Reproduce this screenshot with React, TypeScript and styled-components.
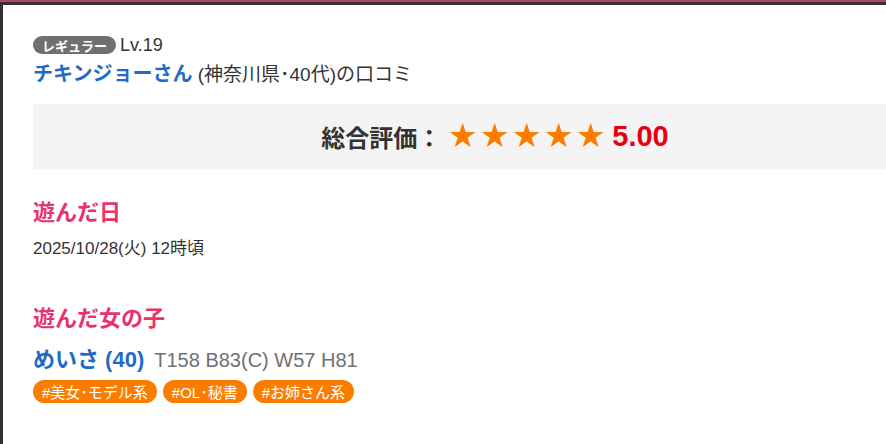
import React from 'react';
import styled, { createGlobalStyle } from 'styled-components';

const GlobalStyle = createGlobalStyle`
    html, body {
        margin: 0;
        padding: 0;
        background: #fff;
        overflow: hidden;
    }
    body {
        font-family: 'Liberation Sans', 'Noto Sans CJK JP', sans-serif;
        color: #333;
    }
`;

const tags = ['#美女･モデル系', '#OL･秘書', '#お姉さん系'];

// 口コミ詳細
function App() {
    return (
        <>
            <GlobalStyle />
            <Page>
                <Card>
                    <Reviewer>
                        <RankRow>
                            <Rank>レギュラー</Rank>
                            <Level>Lv.19</Level>
                        </RankRow>
                        <NameRow>
                            <UserName>チキンジョーさん</UserName> (神奈川県･40代)の口コミ
                        </NameRow>
                    </Reviewer>

                    <ScoreBox>
                        <ScoreLabel>総合評価：</ScoreLabel>
                        <Stars>★★★★★</Stars>
                        <ScoreNum>5.00</ScoreNum>
                    </ScoreBox>

                    <Section>
                        <SectionTitle>遊んだ日</SectionTitle>
                        <DateText>2025/10/28(火) 12時頃</DateText>
                    </Section>

                    <Section>
                        <SectionTitle>遊んだ女の子</SectionTitle>
                        <GirlRow>
                            <GirlName>めいさ (40)</GirlName>
                            <Size>T158 B83(C) W57 H81</Size>
                        </GirlRow>
                        <TagList>
                            {tags.map((t) => (
                                <Tag key={t}>{t}</Tag>
                            ))}
                        </TagList>
                    </Section>
                </Card>
            </Page>
        </>
    );
}

const Page = styled.div`
    border-top: 2px solid #b5426f;
    width: 1000px;
    height: 442px;
`;

const Card = styled.div`
    box-sizing: border-box;
    width: 1000px;
    height: 100%;
    border-top: 3px solid #333;
    border-left: 3px solid #333;
    padding: 30px 40px 0 30px;
`;

const Reviewer = styled.div`
    display: flex;
    flex-direction: column;
    gap: 6px;
`;

const RankRow = styled.div`
    display: flex;
    align-items: center;
    gap: 4px;
    height: 20px;
`;

const Rank = styled.span`
    display: inline-flex;
    align-items: center;
    justify-content: center;
    width: 83px;
    height: 18px;
    border-radius: 9px;
    background: #707070;
    color: #fff;
    font-size: 13px;
    font-weight: bold;
`;

const Level = styled.span`
    font-size: 18px;
    color: #333;
`;

const NameRow = styled.div`
    font-size: 19px;
    line-height: 26px;
    color: #333;
`;

const UserName = styled.span`
    color: #1f6bc8;
    font-weight: bold;
    font-size: 20px;
`;

const ScoreBox = styled.div`
    display: flex;
    align-items: center;
    justify-content: center;
    gap: 8px;
    width: 924px;
    height: 65px;
    margin-top: 16px;
    background: #f4f4f4;
`;

const ScoreLabel = styled.span`
    font-size: 24px;
    font-weight: bold;
    color: #333;
`;

const Stars = styled.span`
    font-size: 27px;
    color: #fb7d00;
    letter-spacing: 5px;
    line-height: 1;
`;

const ScoreNum = styled.span`
    margin-left: -5px;
    font-size: 29px;
    font-weight: bold;
    color: #e60012;
`;

const Section = styled.div`
    margin-top: 30px;
    & + & {
        margin-top: 45px;
    }
`;

const SectionTitle = styled.div`
    font-size: 22px;
    font-weight: bold;
    color: #e8336d;
    line-height: 28px;
`;

const DateText = styled.div`
    margin-top: 11px;
    font-size: 17px;
    line-height: 22px;
    color: #333;
`;

const GirlRow = styled.div`
    display: flex;
    align-items: baseline;
    gap: 10px;
    margin-top: 8px;
`;

const GirlName = styled.span`
    font-size: 22px;
    font-weight: bold;
    color: #1f6bc8;
`;

const Size = styled.span`
    font-size: 20px;
    color: #707070;
`;

const TagList = styled.div`
    display: flex;
    gap: 6px;
    margin-top: 7px;
`;

const Tag = styled.span`
    display: inline-flex;
    align-items: center;
    height: 23px;
    padding: 0 9px;
    border-radius: 12px;
    background: #fb7d00;
    color: #fff;
    font-size: 15px;
`;

export default App;
